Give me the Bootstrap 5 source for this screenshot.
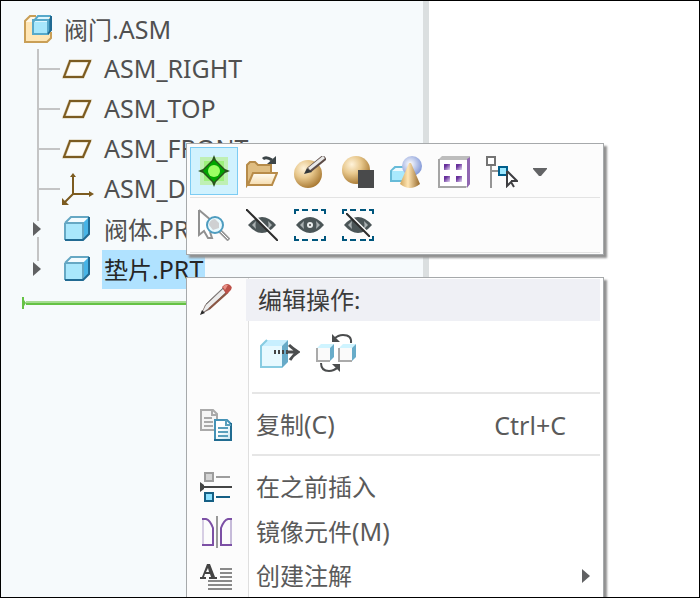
<!DOCTYPE html>
<html lang="zh-CN">
<head>
<meta charset="utf-8">
<meta name="viewport" content="width=device-width, initial-scale=1">
<title>阀门.ASM</title>
<link rel="stylesheet" href="https://cdn.jsdelivr.net/npm/bootstrap@5.3.0/dist/css/bootstrap.min.css">
<style>
body { font-family: "Noto Sans", "Noto Sans CJK SC", sans-serif; font-size: 24px; line-height: 40px; color: #505050; }
.app-frame { border: 1px solid #000; }
.tree-pane { width: 60.5%; background: #f6fafc; padding: 8px 0 0 21px; }
.splitter { width: 6px; background: #dbdfe0; }
.tree-row { height: 40px; }
.tree-label { margin-left: 8px; padding: 0 2px; line-height: 38px; white-space: nowrap; }
.tree-label.latin { padding-bottom: 2px; }
.latin { font-size: 25px; }
.tree-label.selected { background: #b0e2ff; color: #262626; }
.root-icon { margin-left: 2px; }
.root-label { margin-left: 6px; }
.insert-mark { margin-top: 8px; }
.insert-line { height: 4px; background: #65c245; border-top: 2px solid #a5dc91; }
.popups { left: 185px; top: 142px; right: 95px; gap: 22px; }
.popup-box { border: 1px solid #a6a9ab; box-shadow: 3px 3px 2px #919191; }
.mini-bar { background: #fcfcfc; padding: 3px 3px 1px; }
.bar-row { border-bottom: 1px solid #e3e3e3; }
.bar-row + .bar-row { padding-top: 2px; padding-bottom: 2px; }
.tool { width: 48px; height: 50px; border: 1px solid transparent; background: none; padding: 0; display: flex; align-items: center; justify-content: center; }
.tool.on { background: #d1f2fe; border-color: #7cccf4; height: 48px; }
.tool.narrow { width: 28px; }
.ctx { background: linear-gradient(90deg, #fcfcfc 61px, #dfdfdf 61px, #dfdfdf 62px, #fff 62px); padding: 1px 3px 0 0; overflow: hidden; margin-bottom: -6px; color: #5a5a5a; }
.gutter { width: 59px; padding-left: 13px; }
.ctx-head { background: #eff0f5; color: #3c3c3c; padding-left: 12px; line-height: 42px; }
.ctx-tools { padding: 12px 0 19px 73px; gap: 16px; }
.ctx-tools button, .ctx-item { border: 0; background: none; padding: 0; color: inherit; }
.ctx-tools button { line-height: 0; }
.ctx-item { line-height: 44px; text-align: left; width: 100%; }
.ctx-item .item-text { padding-left: 10px; }
.shortcut { margin-right: 34px; }
.more { margin-right: 10px; }
.rule { height: 2px; margin-left: 65px; background: #e6e6e6; }
.copy-group { padding: 8px 0 7px; }
.rest-group { padding-top: 9px; }
svg { flex: none; }
</style>
<script src="https://cdn.jsdelivr.net/npm/bootstrap@5.3.0/dist/js/bootstrap.bundle.min.js"></script>
</head>
<body>
<svg width="0" height="0" class="position-absolute" aria-hidden="true">
  <defs>
    <radialGradient id="gold" cx=".35" cy=".3" r=".75"><stop offset="0" stop-color="#fff3da"/><stop offset=".45" stop-color="#e8c88d"/><stop offset="1" stop-color="#a6762f"/></radialGradient>
    <radialGradient id="blueball" cx=".4" cy=".4" r=".65"><stop offset="0" stop-color="#fff"/><stop offset="1" stop-color="#7d94d6"/></radialGradient>
    <linearGradient id="cone"><stop offset="0" stop-color="#cfa45a"/><stop offset=".4" stop-color="#ffe6b5"/><stop offset="1" stop-color="#96682a"/></linearGradient>
    <linearGradient id="folder" x2="0" y2="1"><stop offset="0" stop-color="#fffdf6"/><stop offset="1" stop-color="#f5dcae"/></linearGradient>
    <linearGradient id="hole" x2="1" y2="1"><stop offset=".3" stop-color="#68309c"/><stop offset="1" stop-color="#e7dcf4"/></linearGradient>
    <linearGradient id="sheet" x2="1" y2="1"><stop offset=".4" stop-color="#fff"/><stop offset="1" stop-color="#c5e4f1"/></linearGradient>
    <symbol id="plane" viewBox="0 0 32 32"><path d="M8 8H28L21 24H2Z" fill="#fdfcf9" stroke="#d6c9ac" stroke-width="3"/><path d="M7 8H29M1 24H22M8 8L2 24M28 8L21 24" fill="none" stroke="#7c5b20" stroke-width="2"/></symbol>
    <symbol id="part" viewBox="0 -1 32 32"><path d="M3 9L9 3H27V20L21 26H3Z" fill="#a9e7fc"/><path d="M3 9L9 3H27L21 9Z" fill="#f4fcff"/><path d="M21 9L27 3V20L21 26Z" fill="#47b4e6"/><path d="M3 9L9 3H27M3 9H21V26M3 9V26" fill="none" stroke="#66a8c4" stroke-width="2"/><path d="M27 3V20L21 26H3" fill="none" stroke="#216a92" stroke-width="2"/></symbol>
    <symbol id="eye" viewBox="0 0 32 32"><path d="M2 16Q9 8 16 8T30 16Q23 24 16 24T2 16Z" fill="#4b5557"/><path d="M6 16Q8 14 10 12Q9 16 10 20Q8 18 6 16ZM26 16Q24 14 22 12Q23 16 22 20Q24 18 26 16Z" fill="#a9b0b1"/><circle cx="16" cy="16" r="3" fill="#e9eded"/><circle cx="16" cy="16" r="1" fill="#444"/></symbol>
    <symbol id="eyeoff" viewBox="0 0 32 32"><path d="M2 16Q9 8 16 8T30 16Q23 24 16 24T2 16Z" fill="#4b5557"/><path d="M6 16Q8 14 10 12Q9 16 10 20Q8 18 6 16ZM26 16Q24 14 22 12Q23 16 22 20Q24 18 26 16Z" fill="#a9b0b1"/></symbol>
    <symbol id="slash" viewBox="0 0 32 32"><path d="M6 4L30 28" stroke="#fcfcfc" stroke-width="2"/><path d="M0 0L32 32" stroke="#2c2c2c" stroke-width="2"/></symbol>
    <symbol id="brackets" viewBox="0 0 32 32"><path d="M1 5V1H5M8 1H14M18 1H24M27 1H31V5M1 27V31H5M8 31H14M18 31H24M27 31H31V27" fill="none" stroke="#00567d" stroke-width="2"/></symbol>
    <symbol id="branch" viewBox="0 0 40 40"><path d="M16 0V40M16 20H38" stroke="#c4c4c5" stroke-width="2"/></symbol>
    <symbol id="tri" viewBox="0 0 8 14"><path d="M0 0L8 7L0 14Z" fill="#606163"/></symbol>
  </defs>
</svg>

<div class="app-frame vh-100 d-flex position-relative overflow-hidden bg-white">
  <nav class="tree-pane" aria-label="模型树">
    <div class="tree-row d-flex align-items-center">
      <svg class="root-icon" width="32" height="32" viewBox="0 -2 32 32"><path d="M1 7L7 1H27V23L23 28H1Z" fill="#ffe6b6"/><path d="M1 7L7 2H12V7Z" fill="#fff8e8"/><path d="M8 8L13 2H25V20H8Z" fill="#ddf7ff"/><path d="M8 7H24V20H8Z" fill="#a7e7fc"/><path d="M24 5L28 1V15L24 19Z" fill="#2b7fa8"/><path d="M9 7L14 1H27M9 5H24V19H9Z" fill="none" stroke="#58a9ca" stroke-width="2"/><path d="M27 1V15L24 19" fill="none" stroke="#216a92" stroke-width="2"/><path d="M12 1H6L1 6V27H23L27 23V17" fill="none" stroke="#c99f57" stroke-width="2"/></svg>
      <span class="tree-label root-label">阀门<span class="latin">.ASM</span></span>
    </div>
    <ul class="list-unstyled mb-0">
      <li class="tree-row d-flex align-items-center"><svg width="40" height="40"><use href="#branch"/></svg><svg width="32" height="32"><use href="#plane"/></svg><span class="tree-label latin">ASM_RIGHT</span></li>
      <li class="tree-row d-flex align-items-center"><svg width="40" height="40"><use href="#branch"/></svg><svg width="32" height="32"><use href="#plane"/></svg><span class="tree-label latin">ASM_TOP</span></li>
      <li class="tree-row d-flex align-items-center"><svg width="40" height="40"><use href="#branch"/></svg><svg width="32" height="32"><use href="#plane"/></svg><span class="tree-label latin">ASM_FRONT</span></li>
      <li class="tree-row d-flex align-items-center"><svg width="40" height="40"><use href="#branch"/></svg><svg width="32" height="32" viewBox="0 0 32 32"><path d="M11 2V21H30M11 21L2 30" fill="none" stroke="#7c5b20" stroke-width="2"/><path d="M8 4H14L11 0ZM27 18V24L32 21ZM0 25V32H7Z" fill="#7c5b20"/></svg><span class="tree-label latin">ASM_DEF</span></li>
      <li class="tree-row d-flex align-items-center"><svg width="40" height="40" viewBox="0 0 40 40"><path d="M16 0V12M16 28V40" stroke="#c4c4c5" stroke-width="2"/><path d="M11 13L19 20L11 27Z" fill="#606163"/></svg><svg width="32" height="32"><use href="#part"/></svg><span class="tree-label">阀体<span class="latin">.PRT</span></span></li>
      <li class="tree-row d-flex align-items-center"><svg width="40" height="40" viewBox="0 0 40 40"><path d="M16 0V12" stroke="#c4c4c5" stroke-width="2"/><path d="M11 13L19 20L11 27Z" fill="#606163"/></svg><svg width="32" height="32"><use href="#part"/></svg><span class="tree-label selected">垫片<span class="latin">.PRT</span></span></li>
    </ul>
    <div class="insert-mark d-flex align-items-center">
      <svg width="4" height="12" viewBox="0 0 4 12"><path d="M0 0L4 6L0 12Z" fill="#65c245"/><path d="M1 0V12" stroke="#65c245" stroke-width="2"/></svg>
      <div class="insert-line flex-grow-1"></div>
    </div>
  </nav>
  <div class="splitter"></div>
  <main class="flex-grow-1"></main>

  <div class="popups position-absolute bottom-0 d-flex flex-column">
    <div class="mini-bar popup-box" role="toolbar" aria-label="快捷工具">
      <div class="bar-row d-flex">
        <button class="tool on" type="button" aria-label="激活"><svg width="32" height="32" viewBox="0 0 32 32"><path d="M2 2H30V30H2Z" fill="#bff0b4"/><path d="M6 6H26V26H6Z" fill="#9df07c"/><path d="M16 0L18 5L27 14L32 16L27 18L18 27L16 32L14 27L5 18L0 16L5 14L14 5Z" fill="#2a531d"/><path d="M16 5L27 16L16 27L5 16Z" fill="#00a500"/><circle cx="16" cy="16" r="6" fill="#9bff64"/></svg></button>
        <button class="tool" type="button" aria-label="打开"><svg width="32" height="32" viewBox="0 0 32 32"><path d="M1 29V9L4 6H9L12 9H25V17L8 18L1 29Z" fill="#dfbd81" stroke="#b68b49" stroke-width="2"/><path d="M7 17H31L26 29H2Z" fill="url(#folder)" stroke="#b88c49" stroke-width="2"/><path d="M17 3Q20 0 26 4" fill="none" stroke="#3c4548" stroke-width="3"/><path d="M30 0V8H21Z" fill="#3c4548"/></svg></button>
        <button class="tool" type="button" aria-label="外观"><svg width="32" height="32" viewBox="0 0 32 32"><circle cx="14" cy="18" r="14" fill="url(#gold)"/><path d="M31 1L15 14" stroke="#5b4b46" stroke-width="6"/><path d="M30 1L15 13" stroke="#e9e9e9" stroke-width="3"/><path d="M13 12L18 16L10 18Z" fill="#32373a"/></svg></button>
        <button class="tool" type="button" aria-label="着色"><svg width="32" height="32" viewBox="0 0 32 32"><circle cx="14" cy="14" r="14" fill="url(#gold)"/><path d="M16 14H32V32H16Z" fill="#494a4b"/></svg></button>
        <button class="tool" type="button" aria-label="表示"><svg width="32" height="32" viewBox="0 0 32 32"><path d="M1 15L5 11H17V25H1Z" fill="#a9e9fd" stroke="#67bbd8" stroke-width="2"/><path d="M2 15L6 12H16V15Z" fill="#effbff"/><circle cx="22" cy="10" r="10" fill="url(#blueball)"/><path d="M19 7H21L30 28Q20 36 10 28Z" fill="url(#cone)"/></svg></button>
        <button class="tool" type="button" aria-label="阵列"><svg width="32" height="32" viewBox="0 0 32 32"><path d="M0 4L4 0H32V28L28 32H0Z" fill="#bdbdbd"/><path d="M29 3L32 1V28L29 32Z" fill="#9067b2"/><path d="M2 4H29V30H2Z" fill="#fff"/><path d="M1 3V31H28" fill="none" stroke="#a5a5a5" stroke-width="2"/><g fill="url(#hole)"><rect x="6" y="8" width="6" height="6"/><rect x="18" y="8" width="6" height="6"/><rect x="6" y="20" width="6" height="6"/><rect x="18" y="20" width="6" height="6"/></g></svg></button>
        <button class="tool" type="button" aria-label="选择父项"><svg width="32" height="32" viewBox="0 0 32 32"><path d="M5 10V32M5 15H12" stroke="#959595" stroke-width="2"/><path d="M1 1H9V9H1Z" fill="#fff" stroke="#747474" stroke-width="2"/><path d="M13 11H21V19H13Z" fill="#9ce8ff" stroke="#005f8c" stroke-width="2"/><path d="M21 15V30L25 26L28 31M21 15L31 25H25" fill="#fff" stroke="#3f3f42" stroke-width="2"/></svg></button>
        <button class="tool narrow" type="button" aria-label="更多选择"><svg width="14" height="8" viewBox="0 0 14 8"><path d="M0 0H14V1L8 8H6L0 1Z" fill="#636466"/></svg></button>
      </div>
      <div class="bar-row d-flex">
        <button class="tool" type="button" aria-label="缩放到选定"><svg width="32" height="32" viewBox="0 0 32 32"><path d="M1 1V26L6 22L10 29H14L12 23M1 1L14 12" fill="#fff" stroke="#919191" stroke-width="2"/><path d="M22 22L31 31" stroke="#999" stroke-width="4"/><path d="M22 22L30 30" stroke="#fff" stroke-width="1"/><circle cx="17" cy="16" r="8" fill="#eafaff" stroke="#4e9cbf" stroke-width="2"/><path d="M11 16A6 6 0 0 1 17 10L21 14V19L15 21Z" fill="#cfd0d2"/></svg></button>
        <button class="tool" type="button" aria-label="隐藏"><svg width="32" height="32"><use href="#eyeoff"/><use href="#slash"/></svg></button>
        <button class="tool" type="button" aria-label="仅显示"><svg width="32" height="32"><use href="#brackets"/><use href="#eye"/></svg></button>
        <button class="tool" type="button" aria-label="仅隐藏"><svg width="32" height="32"><use href="#brackets"/><use href="#eyeoff"/><svg x="4" y="4" width="24" height="24" viewBox="4 4 24 24"><path d="M6 4L28 26" stroke="#fcfcfc" stroke-width="2"/><path d="M4 4L28 28" stroke="#2c2c2c" stroke-width="2"/></svg></svg></button>
      </div>
    </div>

    <div class="ctx popup-box flex-grow-1" role="menu">
      <div class="d-flex">
        <div class="gutter pt-1"><svg class="d-block" width="32" height="32" viewBox="0 0 32 32"><path d="M1 31L5 22L24 4L29 8L9 27Z" fill="#7c6a64"/><path d="M2 30L6 22L23 6L26 9L9 25Z" fill="#ececec"/><path d="M9 26L28 9" stroke="#8b5744" stroke-width="2"/><path d="M6 21L23 5" stroke="#777" stroke-width="1"/><path d="M22 4Q26 -1 30 2T29 9L26 11Z" fill="#bd5048"/><path d="M23 4Q25 1 28 2L25 7Z" fill="#e79187"/><path d="M0 32L2 27L5 30Z" fill="#2b2b2b"/></svg></div>
        <div class="ctx-head flex-grow-1">编辑操作:</div>
      </div>
      <div class="ctx-tools d-flex">
        <button type="button" aria-label="移动"><svg width="40" height="40" viewBox="0 0 40 40"><path d="M1 13L7 7H28V29L22 35H1Z" fill="#e7f9ff"/><path d="M1 13L7 7H28L22 13Z" fill="#c8efff"/><path d="M22 13L28 7V29L22 35Z" fill="#67aac8"/><path d="M7 7L1 13V34H22" fill="none" stroke="#88cce2" stroke-width="2"/><path d="M14 19H28" stroke="#444" stroke-width="4" stroke-dasharray="2 2"/><path d="M26 19H38M29 12Q32 15 38 19Q33 22 30 27" fill="none" stroke="#4b4d4e" stroke-width="3"/></svg></button>
        <button type="button" aria-label="替换"><svg width="40" height="40" viewBox="0 0 40 40"><g id="swapcube"><path d="M1 16L5 11H18V24L14 28H1Z" fill="#fafafa"/><path d="M1 15L5 11H18L14 15Z" fill="#cff4ff"/><path d="M14 15L18 11V24L14 28Z" fill="#68acc9"/><path d="M1 15V28H14" fill="none" stroke="#aaa" stroke-width="2"/></g><use href="#swapcube" x="22"/><path d="M35 10Q36 2 27 2Q22 2 18 6M5 30Q5 38 13 38Q18 38 22 34" fill="none" stroke="#4b4d4e" stroke-width="2"/><path d="M16 1V9H24ZM24 31V39L16 31Z" fill="#4b4d4e"/></svg></button>
      </div>
      <div class="rule"></div>
      <div class="copy-group">
        <button class="ctx-item d-flex align-items-center" type="button" role="menuitem"><span class="gutter d-flex"><svg width="32" height="32" viewBox="0 0 32 32"><path d="M1 1H13L17 5V21H1Z" fill="#f6f6f6" stroke="#aaa" stroke-width="2"/><path d="M12 1V6H17M4 9H12M4 13H13M4 17H13" fill="none" stroke="#aaa" stroke-width="2"/><path d="M15 11H27L31 15V31H15Z" fill="url(#sheet)" stroke="#4592b6" stroke-width="2"/><path d="M31 14V31H14" fill="none" stroke="#216c91" stroke-width="2"/><path d="M18 19H28M18 23H28M18 27H28M26 11V16H31" fill="none" stroke="#599fbc" stroke-width="2"/></svg></span><span class="item-text">复制<span class="latin">(C)</span></span><span class="shortcut latin ms-auto">Ctrl+C</span></button>
      </div>
      <div class="rule"></div>
      <div class="rest-group">
        <button class="ctx-item d-flex align-items-center" type="button" role="menuitem"><span class="gutter d-flex"><svg width="32" height="32" viewBox="0 0 32 32"><path d="M5 2H13V10H5Z" fill="#d4d4d4" stroke="#9d9d9d" stroke-width="2"/><path d="M16 6H30" stroke="#9d9d9d" stroke-width="2"/><path d="M0 11L4 14V18L0 21ZM3 15H32V17H3Z" fill="#434444"/><path d="M5 22H13V30H5Z" fill="#8be1ff" stroke="#155f84" stroke-width="2"/><path d="M16 26H30" stroke="#155f84" stroke-width="2"/></svg></span><span class="item-text">在之前插入</span></button>
        <button class="ctx-item d-flex align-items-center" type="button" role="menuitem"><span class="gutter d-flex"><svg width="32" height="32" viewBox="0 0 32 32"><path d="M17 0V32" stroke="#999" stroke-width="2"/><path d="M3 3V29" stroke="#d7cee4" stroke-width="2"/><path d="M31 3V29" stroke="#c6bbd9" stroke-width="2"/><path d="M2 3H6Q10 4 13 12V29H2M32 3H28Q24 4 21 12V29H32" fill="none" stroke="#7c50a5" stroke-width="2"/></svg></span><span class="item-text">镜像元件<span class="latin">(M)</span></span></button>
        <button class="ctx-item d-flex align-items-center" type="button" role="menuitem"><span class="gutter d-flex"><svg width="32" height="32" viewBox="0 0 32 32"><path d="M0 19V17H2L7 4H10L15 17H17V19H9V17H11L10 14H5L4 17H6V19ZM6 12H9L8 8Z" fill="#444" fill-rule="evenodd"/><path d="M20 9H32M20 13H32M20 17H32M8 21H32M8 25H32M8 29H32" stroke="#8a8a8a" stroke-width="2"/></svg></span><span class="item-text">创建注解</span><svg class="more ms-auto" width="8" height="14"><use href="#tri"/></svg></button>
      </div>
    </div>
  </div>
</div>
</body>
</html>
